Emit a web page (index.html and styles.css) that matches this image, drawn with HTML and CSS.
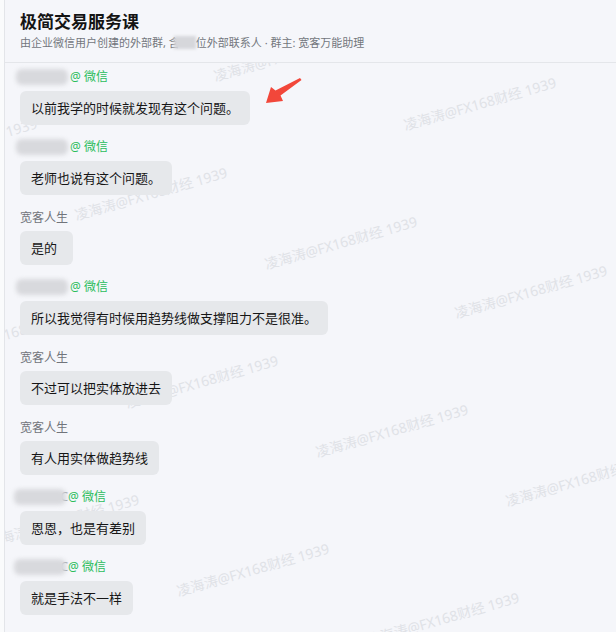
FILE: index.html
```html
<!DOCTYPE html>
<html lang="zh-CN">
<head>
<meta charset="utf-8">
<title>极简交易服务课</title>
<link rel="stylesheet" href="styles.css">
</head>
<body>
<div class="panel">
  <div class="watermarks">
    <span class="wm w1">凌海涛@FX168财经 1939</span>
    <span class="wm w2">凌海涛@FX168财经 1939</span>
    <span class="wm w3">凌海涛@FX168财经 1939</span>
    <span class="wm w4">凌海涛@FX168财经 1939</span>
    <span class="wm w5">凌海涛@FX168财经 1939</span>
    <span class="wm w6">凌海涛@FX168财经 1939</span>
    <span class="wm w7">凌海涛@FX168财经 1939</span>
    <span class="wm w8">凌海涛@FX168财经 1939</span>
    <span class="wm w9">凌海涛@FX168财经 1939</span>
    <span class="wm w10">凌海涛@FX168财经 1939</span>
    <span class="wm w11">凌海涛@FX168财经 1939</span>
    <span class="wm w12">凌海涛@FX168财经 1939</span>
    <span class="wm w13">凌海涛@FX168财经 1939</span>
  </div>

  <header class="header">
    <h1 class="title">极简交易服务课</h1>
    <p class="subtitle">由企业微信用户创建的外部群, 含<span class="sub-blur"></span>位外部联系人 · 群主: 宽客万能助理</p>
  </header>

  <main class="chat">
    <div class="msg">
      <div class="name"><span class="blur"></span><span class="src">@ 微信</span></div>
      <div class="bubble">以前我学的时候就发现有这个问题。</div>
    </div>
    <div class="msg">
      <div class="name"><span class="blur"></span><span class="src">@ 微信</span></div>
      <div class="bubble">老师也说有这个问题。</div>
    </div>
    <div class="msg">
      <div class="name"><span class="who">宽客人生</span></div>
      <div class="bubble">是的</div>
    </div>
    <div class="msg">
      <div class="name"><span class="blur"></span><span class="src">@ 微信</span></div>
      <div class="bubble">所以我觉得有时候用趋势线做支撑阻力不是很准。</div>
    </div>
    <div class="msg">
      <div class="name"><span class="who">宽客人生</span></div>
      <div class="bubble">不过可以把实体放进去</div>
    </div>
    <div class="msg">
      <div class="name"><span class="who">宽客人生</span></div>
      <div class="bubble">有人用实体做趋势线</div>
    </div>
    <div class="msg">
      <div class="name"><span class="frag">C</span><span class="blur over"></span><span class="src">@ 微信</span></div>
      <div class="bubble">恩恩，也是有差别</div>
    </div>
    <div class="msg">
      <div class="name"><span class="frag">C</span><span class="blur over"></span><span class="src">@ 微信</span></div>
      <div class="bubble">就是手法不一样</div>
    </div>
  </main>

  <svg class="arrow" width="40" height="30" viewBox="0 0 40 30" aria-hidden="true">
    <polygon points="1,26 6,10 10.5,13.5 35,1 36.5,3 15.5,18.5 18,24" fill="#f2473a"/>
  </svg>
</div>
</body>
</html>
```

FILE: styles.css
```css
html, body {
  margin: 0;
  padding: 0;
}

body {
  background: #fafbfc;
  padding-left: 4px;
  font-family: "Noto Sans", "Noto Sans CJK SC", sans-serif;
  color: #1a1a1a;
}

.panel {
  position: relative;
  min-height: 632px;
  background: #f5f6fa;
  border-left: 1px solid #e3e5e9;
  overflow: hidden;
}

.watermarks {
  position: absolute;
  inset: 0;
  z-index: 0;
  pointer-events: none;
}

.wm {
  position: absolute;
  white-space: nowrap;
  font-family: "Noto Sans", "Noto Sans CJK SC", sans-serif;
  font-size: 14px;
  line-height: 16px;
  color: #e0e2e7;
  transform: translate(-50%, -50%) rotate(-16deg);
}

/* watermark centres (panel coords = page x - 5) */
.w1  { left: 475px; top: 104px; }
.w2  { left: 336px; top: 243px; }
.w3  { left: 197px; top: 382px; }
.w4  { left: 58px;  top: 521px; }
.w5  { left: 526px; top: 292px; }
.w6  { left: 387px; top: 431px; }
.w7  { left: 248px; top: 570px; }
.w8  { left: 577px; top: 480px; }
.w9  { left: 438px; top: 619px; }
.w10 { left: 146px; top: 194px; }
.w11 { left: 7px;   top: 333px; }
.w12 { left: -44px; top: 145px; }
.w13 { left: 285px; top: 55px; }

.header {
  position: relative;
  z-index: 2;
  background: #f5f6fa;
  padding: 10px 15px 11px;
  border-bottom: 1px solid #e4e6ea;
}

.title {
  margin: 0;
  font-family: "Noto Sans CJK SC", sans-serif;
  font-size: 17px;
  line-height: 22px;
  font-weight: 700;
  color: #141414;
}

.subtitle {
  margin: 3px 0 0;
  font-family: "Noto Sans", "Noto Sans CJK SC", sans-serif;
  font-size: 11px;
  line-height: 16px;
  color: #73767d;
  white-space: nowrap;
}

.sub-blur {
  display: inline-block;
  vertical-align: -2px;
  width: 22px;
  height: 13px;
  margin-left: -6px;
  background: #d6d7db;
  filter: blur(1.5px);
}

.chat {
  position: relative;
  z-index: 1;
  padding: 5px 15px 0;
}

.msg {
  display: flex;
  flex-direction: column;
  align-items: flex-start;
  margin-bottom: 13px;
}

.name {
  display: flex;
  align-items: center;
  height: 18px;
  margin-bottom: 5px;
  font-family: "Noto Sans", "Noto Sans CJK SC", sans-serif;
  font-size: 12px;
  line-height: 18px;
}

.blur {
  display: inline-block;
  width: 52px;
  height: 16px;
  margin-left: -4px;
  background: #d8d9dd;
  border-radius: 6px;
  filter: blur(2px);
}

.blur.over {
  margin-left: -58px;
}

.frag {
  display: inline-block;
  width: 52px;
  text-align: right;
  color: #9a9da3;
  margin-left: -4px;
  padding-right: 4px;
}

.src {
  margin-left: 2px;
  color: #2bbd5c;
}

.who {
  color: #71747b;
  font-family: "Noto Sans CJK SC", sans-serif;
}

.bubble {
  box-sizing: border-box;
  min-width: 53px;
  padding: 7px 11px;
  background: #e6e8eb;
  border-radius: 6px;
  font-family: "Noto Sans CJK SC", sans-serif;
  font-size: 13px;
  line-height: 20px;
  color: #161616;
  white-space: nowrap;
}

.arrow {
  position: absolute;
  z-index: 3;
  left: 260px;
  top: 77px;
}
```
